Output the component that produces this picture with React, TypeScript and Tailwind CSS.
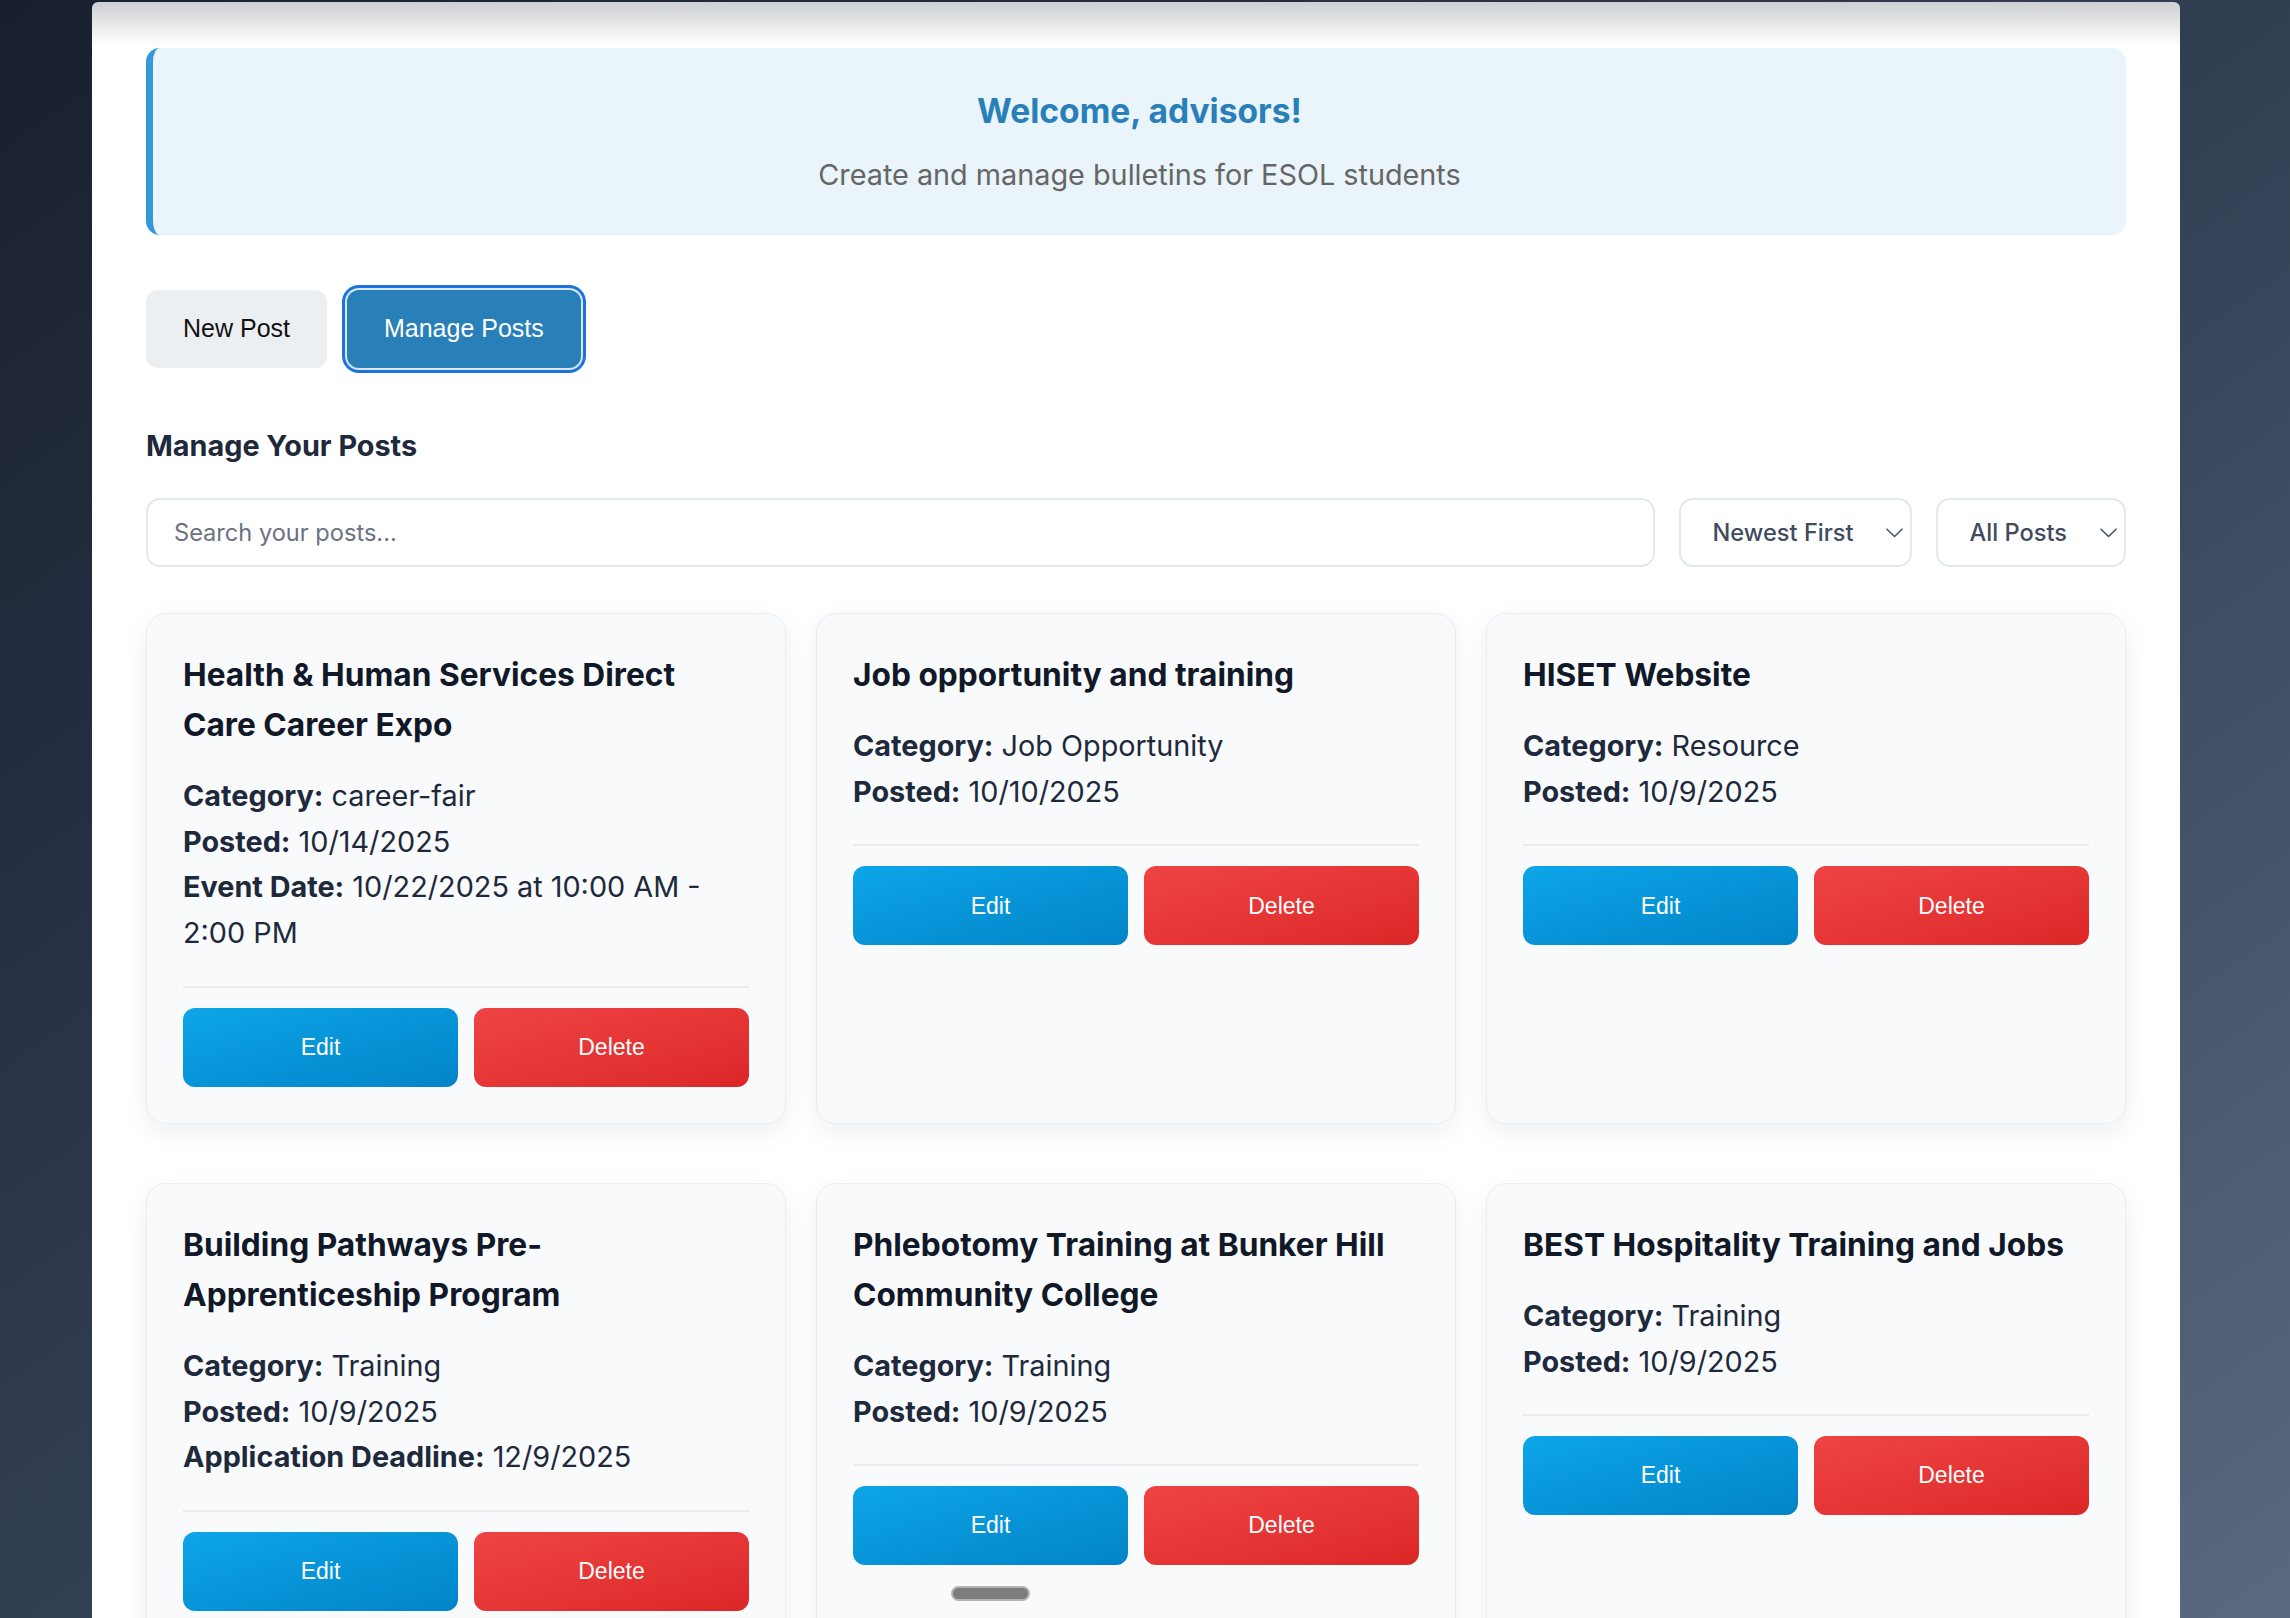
import React from 'react';

interface Post {
  title: string;
  fields: Array<{ label: string; value: string }>;
}

const posts: Post[] = [
  {
    title: 'Health & Human Services Direct Care Career Expo',
    fields: [
      { label: 'Category:', value: 'career-fair' },
      { label: 'Posted:', value: '10/14/2025' },
      { label: 'Event Date:', value: '10/22/2025 at 10:00 AM - 2:00 PM' },
    ],
  },
  {
    title: 'Job opportunity and training',
    fields: [
      { label: 'Category:', value: 'Job Opportunity' },
      { label: 'Posted:', value: '10/10/2025' },
    ],
  },
  {
    title: 'HISET Website',
    fields: [
      { label: 'Category:', value: 'Resource' },
      { label: 'Posted:', value: '10/9/2025' },
    ],
  },
  {
    title: 'Building Pathways Pre-Apprenticeship Program',
    fields: [
      { label: 'Category:', value: 'Training' },
      { label: 'Posted:', value: '10/9/2025' },
      { label: 'Application Deadline:', value: '12/9/2025' },
    ],
  },
  {
    title: 'Phlebotomy Training at Bunker Hill Community College',
    fields: [
      { label: 'Category:', value: 'Training' },
      { label: 'Posted:', value: '10/9/2025' },
    ],
  },
  {
    title: 'BEST Hospitality Training and Jobs',
    fields: [
      { label: 'Category:', value: 'Training' },
      { label: 'Posted:', value: '10/9/2025' },
    ],
  },
];

const Chevron = () => (
  <svg width="17" height="10" viewBox="0 0 17 10" fill="none" className="shrink-0">
    <path d="M1 1.2 L8.5 8.5 L16 1.2" stroke="#475569" strokeWidth="1.6" strokeLinecap="round" strokeLinejoin="round" />
  </svg>
);

const PostCard = ({ post }: { post: Post }) => (
  <div className="flex flex-col rounded-[20px] border border-[#e9edf2] bg-[#f8fafc] p-[36px] shadow-[0_8px_24px_rgba(15,23,42,0.07)]">
    <h3 className="mb-[23px] text-[31.7px] font-bold leading-[50px] text-[#111827]">{post.title}</h3>
    <div className="mb-[30px] text-[28.8px] leading-[45.7px] text-[#1e293b]">
      {post.fields.map((f) => (
        <p key={f.label}>
          <span className="font-bold">{f.label}</span> {f.value}
        </p>
      ))}
    </div>
    <div className="grid grid-cols-2 gap-[16px] border-t-2 border-[#e8ebef] pt-[20px] font-['Liberation_Sans',Arial,sans-serif] text-[23px] text-white">
      <button className="h-[79px] rounded-[12px] bg-gradient-to-br from-[#0ea5e9] to-[#0284c7]">Edit</button>
      <button className="h-[79px] rounded-[12px] bg-gradient-to-br from-[#ef4444] to-[#dc2626]">Delete</button>
    </div>
  </div>
);

export default function App() {
  return (
    <div className="relative h-[1618px] overflow-hidden bg-gradient-to-br from-[#181f2f] via-[#323e52] to-[#5c687f] pt-[2px] font-['Inter',sans-serif]">
      <div className="ml-[92px] min-h-[1700px] w-[2088px] rounded-t-[6px] bg-[linear-gradient(to_bottom,#cdcfd3_0px,#ffffff_44px)] px-[54px] pt-[46px]">
        <div className="flex flex-col items-center rounded-[14px] border-l-[7px] border-[#3498db] bg-[#eaf4fb] pb-[38px] pt-[43px]">
          <h1 className="text-[33.6px] font-bold leading-[40px] text-[#2980b9]">Welcome, advisors!</h1>
          <p className="mt-[21px] text-[28.8px] leading-[45px] text-[#666666]">Create and manage bulletins for ESOL students</p>
        </div>

        <div className="mt-[55px] flex gap-[20px] font-['Liberation_Sans',Arial,sans-serif] text-[25px]">
          <button className="h-[78px] rounded-[12px] bg-[#eceff1] px-[37px] text-[#111111]">New Post</button>
          <button className="h-[78px] rounded-[12px] bg-[#2980b9] px-[37px] text-white shadow-[0_0_0_2px_#d8e7f7,0_0_0_5px_#1b72e0]">
            Manage Posts
          </button>
        </div>

        <h2 className="mt-[55px] text-[28.8px] font-bold leading-[45px] text-[#1e293b]">Manage Your Posts</h2>

        <div className="mt-[30px] flex h-[69px] gap-[24px] text-[23.6px]">
          <div className="flex flex-1 items-center rounded-[14px] border-2 border-[#e2e8f0] bg-white pl-[26px] text-[#6b7280]">
            Search your posts...
          </div>
          <div className="flex items-center rounded-[14px] border-2 border-[#e2e8f0] bg-white pl-[32px] pr-[7px] font-medium text-[#3f4b5e]">
            <span>Newest First</span>
            <span className="ml-[32px]">
              <Chevron />
            </span>
          </div>
          <div className="flex items-center rounded-[14px] border-2 border-[#e2e8f0] bg-white pl-[32px] pr-[7px] font-medium text-[#3f4b5e]">
            <span>All Posts</span>
            <span className="ml-[33px]">
              <Chevron />
            </span>
          </div>
        </div>

        <div className="mt-[46px] grid grid-cols-3 gap-x-[30px] gap-y-[59px]">
          {posts.map((p) => (
            <PostCard key={p.title} post={p} />
          ))}
        </div>
      </div>

      <div className="absolute left-[951px] top-[1586px] h-[15px] w-[79px] rounded-full border-2 border-[#b4b4b6] bg-[#7d7d80]" />
    </div>
  );
}
